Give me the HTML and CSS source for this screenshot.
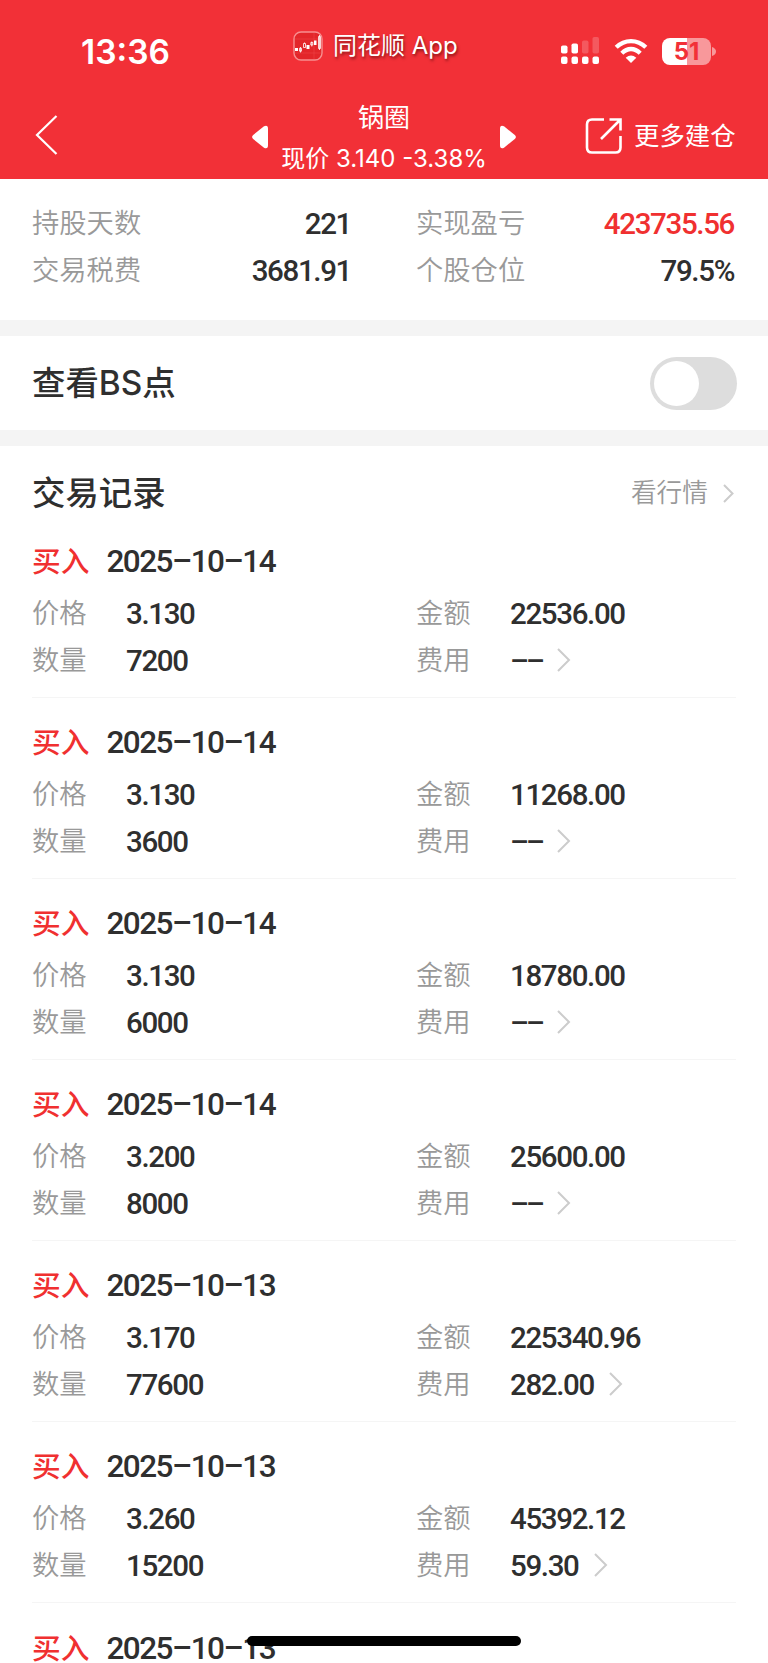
FILE: index.html
```html
<!DOCTYPE html>
<html lang="zh-CN">
<head>
  <meta charset="UTF-8" />
  <meta name="viewport" content="width=device-width, initial-scale=1.0" />
  <title>锅圈</title>
  <link rel="stylesheet" href="styles.css">
</head>
<body>
  <header class="header">
    <div class="status-bar">
      <div class="time">13:36</div>
      <div class="app-tag">
        <svg class="app-icon" width="30" height="30" viewBox="0 0 30 30">
          <rect x="1" y="1" width="28" height="28" rx="7" fill="#e3262a" stroke="#f78f90" stroke-width="1.4"/>
          <path d="M2 8h26M2 22h26M21 2v26" stroke="#ee4a4c" stroke-width=".5"/>
          <path d="M2 17h3v3H2zM13.500 14h3v4h-3zM21 9.500h2.500v4.500H21z" fill="#fff"/>
          <path d="M6.500 17.200h2v3h-2zM7.500 16v5.500M10.500 12.500h2v4h-2zM11.500 11.500v1M17.800 11.500h2v2.500h-2zM18.800 10.500v5M25.500 5.500h2v12h-2zM26.500 4v15" fill="none" stroke="#fff" stroke-width=".8"/>
        </svg>
        <span>同花顺 App</span>
      </div>
      <div class="status-icons">
        <svg width="39" height="28" viewBox="0 0 39 28" fill="#fff">
          <rect x="0" y="8.500" width="6.500" height="8" rx="1.800"/>
          <rect x="10.500" y="6.500" width="6.500" height="10" rx="1.800"/>
          <rect x="21" y="3.500" width="6.500" height="13" rx="1.800" opacity=".2"/>
          <rect x="31.500" y="0" width="6.500" height="16.500" rx="1.800" opacity=".2"/>
          <rect x="0" y="19.500" width="6.500" height="7.500" rx="2"/>
          <rect x="10.500" y="19.500" width="6.500" height="7.500" rx="2"/>
          <rect x="21" y="19.500" width="6.500" height="7.500" rx="2"/>
          <rect x="31.500" y="19.500" width="6.500" height="7.500" rx="2"/>
        </svg>
        <svg class="wifi" width="34" height="26" viewBox="0 0 34 26" fill="none" stroke="#fff" stroke-width="4.300">
          <path d="M2.200 9.300Q8.500 3.100 17 3.100T31.800 9.300"/>
          <path d="M7.800 15.200Q12 11 17 11T26.200 15.200"/>
          <path d="M17 25l-5.300-5.300Q17 15.500 22.300 19.700z" fill="#fff" stroke="none"/>
        </svg>
        <div class="battery"><span>51</span></div>
        <svg class="battery-cap" width="4" height="9" viewBox="0 0 4 9"><path d="M0 0Q4 1.500 4 4.500T0 9z" fill="#f8989b"/></svg>
      </div>
    </div>
    <div class="nav">
      <svg class="back" width="24" height="40" viewBox="0 0 24 40" fill="none" stroke="#fff" stroke-width="2.200">
        <path d="M21.500 1L2 20l19.500 19"/>
      </svg>
      <div class="stock">
        <svg width="17" height="24" viewBox="0 0 17 24" fill="#fff"><path d="M1.200 10L12 1.300Q16 -.5 16 4v16q0 4.500-4 2.700L1.200 14q-2.200-2 0-4z"/></svg>
        <div class="stock-info">
          <div class="stock-name">锅圈</div>
          <div class="stock-price">现价 3.140 -3.38%</div>
        </div>
        <svg width="17" height="24" viewBox="0 0 17 24" fill="#fff"><path d="M15.800 10L5 1.300Q1 -.5 1 4v16q0 4.500 4 2.700L15.800 14q2.200-2 0-4z"/></svg>
      </div>
      <div class="more">
        <svg width="38" height="38" viewBox="0 0 38 38" fill="none" stroke="#fff" stroke-width="2.600">
          <path d="M19 2.500H7Q2 2.500 2 7.500v23q0 5 5 5h23.500q5 0 5-5V19M24.500 2.500h11v11M35 3L16 22"/>
        </svg>
        <span>更多建仓</span>
      </div>
    </div>
  </header>

  <section class="stats">
    <div class="stat"><span class="label">持股天数</span><span class="num">221</span></div>
    <div class="stat"><span class="label">实现盈亏</span><span class="num red">423735.56</span></div>
    <div class="stat"><span class="label">交易税费</span><span class="num">3681.91</span></div>
    <div class="stat"><span class="label">个股仓位</span><span class="num">79.5%</span></div>
  </section>

  <section class="bs-row">
    <span class="title">查看BS点</span>
    <div class="switch"></div>
  </section>

  <section class="records">
    <div class="records-head">
      <span class="title">交易记录</span>
      <span class="quote">看行情
        <svg width="11" height="19" viewBox="0 0 11 19"><path class="chevron" d="M1 1l8.500 8.500L1 18"/></svg>
      </span>
    </div>

    <div class="record">
      <div class="record-head"><span class="side">买入</span><span class="date">2025–10–14</span></div>
      <div class="fields">
        <span class="label">价格</span><span class="num">3.130</span>
        <span class="label">金额</span><span class="num">22536.00</span>
        <span class="label">数量</span><span class="num">7200</span>
        <span class="label">费用</span><span class="num fee"><i>––</i><svg width="14" height="24" viewBox="0 0 14 24"><path class="chevron" d="M1 1l11 11L1 23"/></svg></span>
      </div>
    </div>

    <div class="record">
      <div class="record-head"><span class="side">买入</span><span class="date">2025–10–14</span></div>
      <div class="fields">
        <span class="label">价格</span><span class="num">3.130</span>
        <span class="label">金额</span><span class="num">11268.00</span>
        <span class="label">数量</span><span class="num">3600</span>
        <span class="label">费用</span><span class="num fee"><i>––</i><svg width="14" height="24" viewBox="0 0 14 24"><path class="chevron" d="M1 1l11 11L1 23"/></svg></span>
      </div>
    </div>

    <div class="record">
      <div class="record-head"><span class="side">买入</span><span class="date">2025–10–14</span></div>
      <div class="fields">
        <span class="label">价格</span><span class="num">3.130</span>
        <span class="label">金额</span><span class="num">18780.00</span>
        <span class="label">数量</span><span class="num">6000</span>
        <span class="label">费用</span><span class="num fee"><i>––</i><svg width="14" height="24" viewBox="0 0 14 24"><path class="chevron" d="M1 1l11 11L1 23"/></svg></span>
      </div>
    </div>

    <div class="record">
      <div class="record-head"><span class="side">买入</span><span class="date">2025–10–14</span></div>
      <div class="fields">
        <span class="label">价格</span><span class="num">3.200</span>
        <span class="label">金额</span><span class="num">25600.00</span>
        <span class="label">数量</span><span class="num">8000</span>
        <span class="label">费用</span><span class="num fee"><i>––</i><svg width="14" height="24" viewBox="0 0 14 24"><path class="chevron" d="M1 1l11 11L1 23"/></svg></span>
      </div>
    </div>

    <div class="record">
      <div class="record-head"><span class="side">买入</span><span class="date">2025–10–13</span></div>
      <div class="fields">
        <span class="label">价格</span><span class="num">3.170</span>
        <span class="label">金额</span><span class="num">225340.96</span>
        <span class="label">数量</span><span class="num">77600</span>
        <span class="label">费用</span><span class="num fee">282.00<svg width="14" height="24" viewBox="0 0 14 24"><path class="chevron" d="M1 1l11 11L1 23"/></svg></span>
      </div>
    </div>

    <div class="record">
      <div class="record-head"><span class="side">买入</span><span class="date">2025–10–13</span></div>
      <div class="fields">
        <span class="label">价格</span><span class="num">3.260</span>
        <span class="label">金额</span><span class="num">45392.12</span>
        <span class="label">数量</span><span class="num">15200</span>
        <span class="label">费用</span><span class="num fee">59.30<svg width="14" height="24" viewBox="0 0 14 24"><path class="chevron" d="M1 1l11 11L1 23"/></svg></span>
      </div>
    </div>

    <div class="record last">
      <div class="record-head"><span class="side">买入</span><span class="date">2025–10–13</span></div>
    </div>
  </section>

  <div class="home-bar"></div>
</body>
</html>
```
FILE: styles.css
```css
* {
  box-sizing: border-box;
}

body {
  margin: 0;
  width: 768px;
  height: 1663px;
  overflow: hidden;
  position: relative;
  background: #fff;
  color: #2f2f2f;
  font-family: Inter, "Noto Sans CJK SC", sans-serif;
}

svg {
  display: block;
  flex: none;
}

/* header */
.header {
  height: 179px;
  background: #f23037;
  color: #fff;
}

.status-bar {
  height: 96px;
  display: grid;
  grid-template-columns: 293px 268px 1fr;
  align-items: start;
}

.time {
  padding: 32px 0 0 81px;
  font-size: 33.5px;
  font-weight: 600;
  line-height: 40px;
}

.app-tag {
  display: flex;
  align-items: center;
  gap: 10px;
  padding-top: 30px;
  font-size: 24px;
  line-height: 30px;
  white-space: nowrap;
  text-shadow: 1px 2px 3px rgba(60, 0, 0, 0.6);
}

.app-tag span {
  padding-top: 1px;
}

.status-icons {
  display: flex;
  align-items: center;
  padding-top: 37px;
}

.wifi {
  margin: 0 14px 0 14px;
}

.battery {
  width: 49px;
  height: 27px;
  border-radius: 8px;
  background: linear-gradient(90deg, #fff 51%, #f8989b 51%);
  color: #f23037;
  font-size: 24px;
  font-weight: 700;
  line-height: 28px;
  text-align: center;
}

.battery-cap {
  margin-left: 1px;
}

.nav {
  height: 83px;
  display: grid;
  grid-template-columns: 216px 336px 1fr;
  align-items: start;
}

.back {
  margin: 19px 0 0 35px;
}

.stock {
  width: 264px;
  margin-left: 36px;
  display: flex;
  align-items: center;
  justify-content: space-between;
}

.stock svg {
  margin-bottom: 2px;
}

.stock-info {
  padding-top: 1px;
  text-align: center;
  white-space: nowrap;
}

.stock-name {
  font-size: 26px;
  line-height: 41px;
}

.stock-price {
  font-size: 24px;
  line-height: 41px;
}

.more {
  display: flex;
  align-items: center;
  gap: 11px;
  padding: 21px 0 0 33px;
  font-size: 25.4px;
  line-height: 38px;
  white-space: nowrap;
}

/* summary */
.stats {
  height: 141px;
  padding: 22px 32px 0;
  display: grid;
  grid-template-columns: 319px 318px;
  column-gap: 65px;
  align-content: start;
}

.stat {
  display: flex;
  justify-content: space-between;
  line-height: 46.6px;
}

.label {
  color: #999;
  font-size: 27.3px;
  font-weight: 350;
}

.num {
  font-family: Roboto, sans-serif;
  font-size: 29.5px;
  font-weight: 500;
  letter-spacing: -1.35px;
}

.red {
  color: #f03030;
}

.bs-row {
  height: 126px;
  padding: 0 31px 0 32px;
  border-top: 16px solid #f4f4f4;
  border-bottom: 16px solid #f4f4f4;
  display: flex;
  align-items: center;
  justify-content: space-between;
}

.title {
  font-size: 33.4px;
  font-weight: 500;
}

.bs-row .title {
  padding-bottom: 5px;
}

.switch {
  width: 87px;
  height: 53px;
  padding: 4px;
  border-radius: 27px;
  background: #ddd;
}

.switch::before {
  content: "";
  display: block;
  width: 45px;
  height: 45px;
  border-radius: 50%;
  background: #fff;
}

/* trade records */
.records {
  padding: 0 32px;
}

.records-head {
  height: 70.500px;
  padding-top: 24px;
  display: flex;
  justify-content: space-between;
  line-height: 46px;
}

.quote {
  display: flex;
  align-items: center;
  gap: 15px;
  height: 46px;
  padding-right: 2px;
  color: #999;
  font-size: 25.7px;
  font-weight: 350;
}

.chevron {
  fill: none;
  stroke: #ccc;
  stroke-width: 2;
}

.record {
  height: 181.1px;
  padding-top: 22.5px;
  border-bottom: 1.5px solid #f5f5f5;
}

.record.last {
  height: 130px;
  border-bottom: none;
}

.record-head {
  display: flex;
  gap: 17px;
  margin-bottom: 6px;
  line-height: 46px;
}

.side {
  color: #f03030;
  font-size: 28.7px;
  font-weight: 500;
}

.date {
  font-family: Roboto, sans-serif;
  font-size: 31.5px;
  font-weight: 500;
  letter-spacing: -1.5px;
}

.fields {
  display: grid;
  grid-template-columns: 94px 290px 94px 1fr;
  line-height: 46.6px;
}

.fee {
  display: flex;
  align-items: center;
  gap: 15px;
}

.fee i {
  font-style: normal;
  letter-spacing: -3px;
}

.fee svg {
  margin-bottom: 2px;
}

.home-bar {
  position: absolute;
  left: 247px;
  top: 1636px;
  width: 274px;
  height: 10px;
  border-radius: 5px;
  background: #000;
}
```
